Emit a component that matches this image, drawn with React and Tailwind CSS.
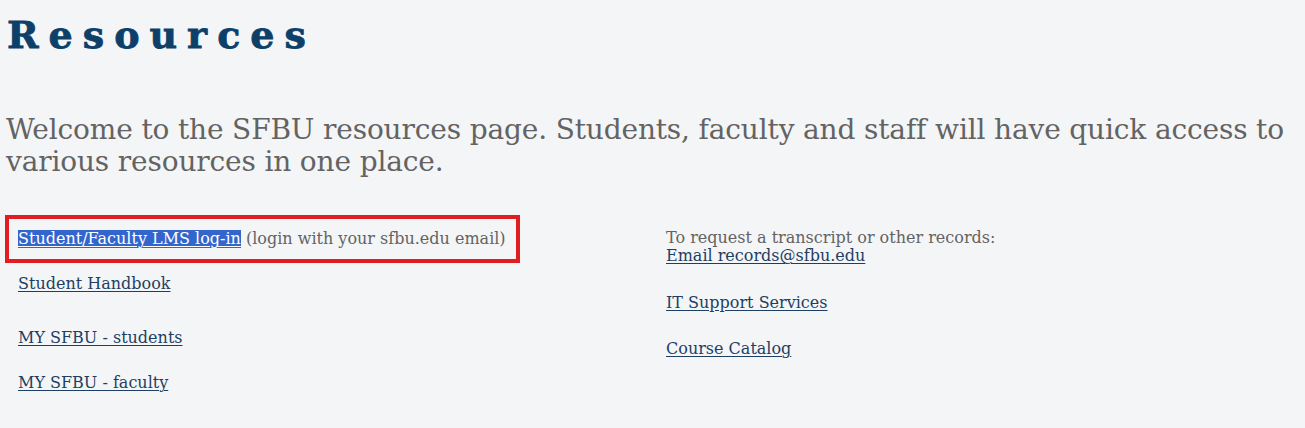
export default function App() {
  const link = "text-[#1d3f63] underline underline-offset-2 decoration-1";
  return (
    <div className="min-h-[428px] w-[1305px] bg-[#f4f5f7] font-['DejaVu_Serif',serif]">
      <div className="pl-[5px] pt-[13px]">
        <h1 className="font-bold text-[38px] leading-[44px] tracking-[10px] text-[#0d4068] [-webkit-text-stroke:0.8px_#0d4068] pl-[2px]">
          Resources
        </h1>
        <p className="mt-[57px] text-[28px] leading-[32px] tracking-[-0.15px] text-[#636363] pl-[1px] pr-2">
          Welcome to the SFBU resources page. Students, faculty and staff will have quick access to various resources in one place.
        </p>
        <div className="mt-[37px] grid grid-cols-[661px_1fr] text-[16px] leading-[18px]">
          <div className="flex flex-col">
            <div className="w-[515px] h-[48px] border-4 border-[#e31b23] flex items-center pl-[9px]">
              <span className="bg-[#3366cc] text-white underline underline-offset-2 decoration-1">Student/Faculty LMS log-in</span>
              <span className="text-[#636363]">&nbsp;(login with your sfbu.edu email)</span>
            </div>
            <a className={`${link} ml-[13px] mt-[12px] w-fit`}>Student Handbook</a>
            <a className={`${link} ml-[13px] mt-[36px] w-fit`}>MY SFBU - students</a>
            <a className={`${link} ml-[13px] mt-[27px] w-fit`}>MY SFBU - faculty</a>
          </div>
          <div className="flex flex-col pt-[14px]">
            <span className="text-[#636363]">To request a transcript or other records:</span>
            <a className={`${link} w-fit`}>Email records@sfbu.edu</a>
            <a className={`${link} mt-[29px] w-fit`}>IT Support Services</a>
            <a className={`${link} mt-[28px] w-fit`}>Course Catalog</a>
          </div>
        </div>
      </div>
    </div>
  );
}
